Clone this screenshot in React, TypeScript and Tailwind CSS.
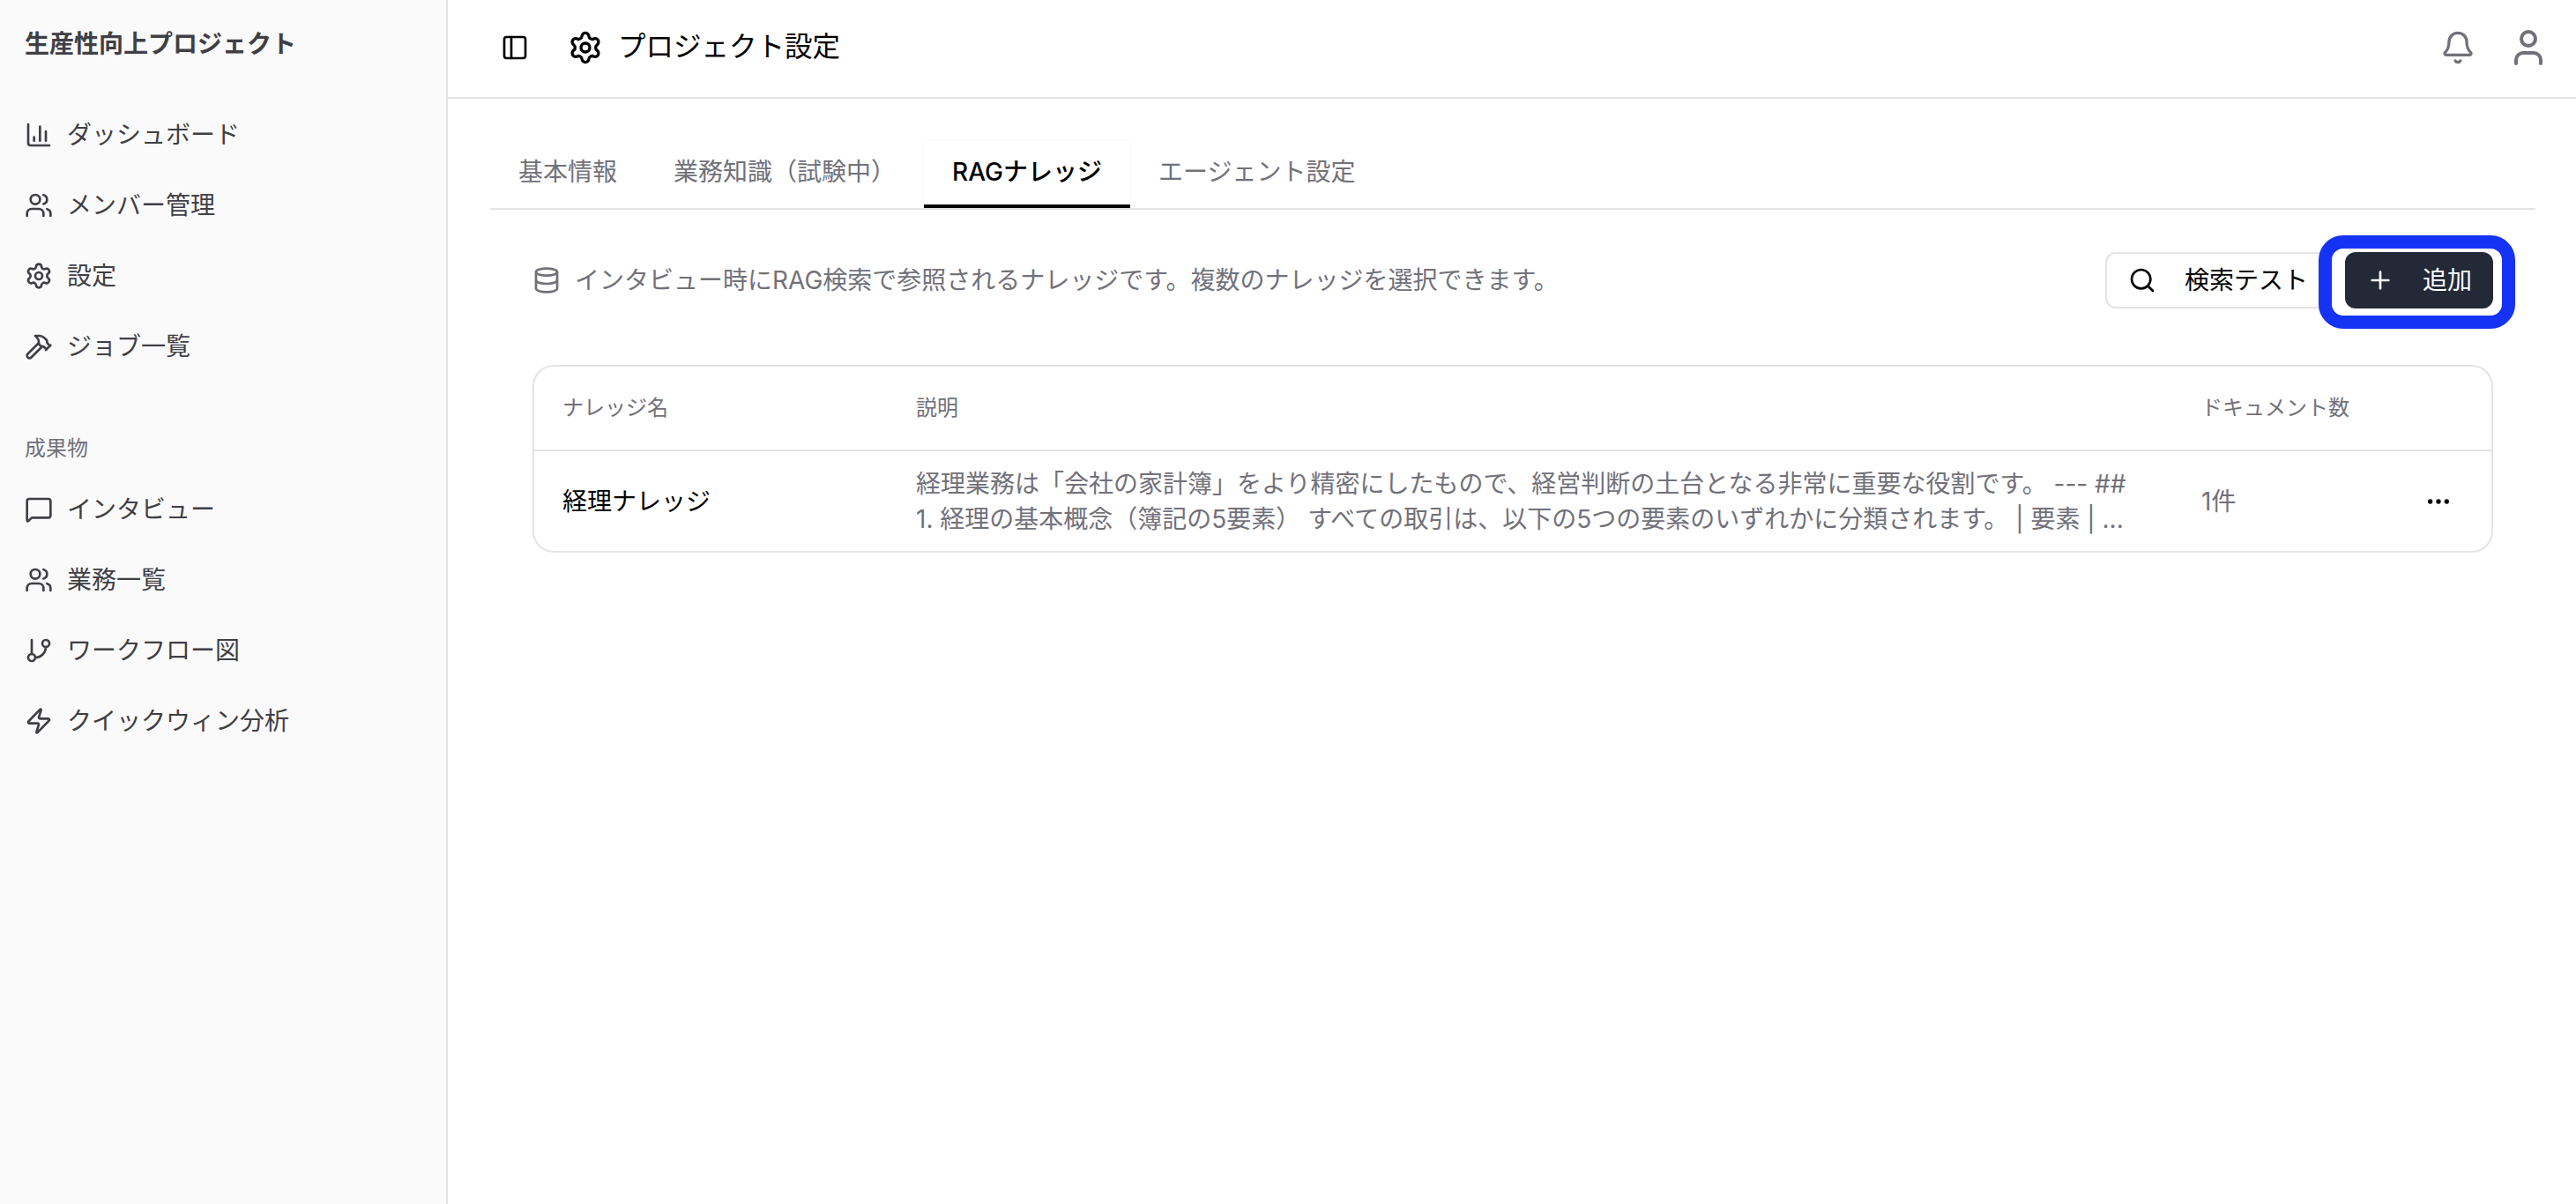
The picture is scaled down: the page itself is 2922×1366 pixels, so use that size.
import { BarChart3, Bell, Database, GitBranch, Hammer, MessageSquare, MoreHorizontal, PanelLeft, Plus, Search, Settings, User, Users, Zap } from "lucide-react";
import type { ComponentType } from "react";

type NavItem = { label: string; icon: ComponentType<{ size?: number; className?: string }> };

const MAIN_NAV: NavItem[] = [
  { label: "ダッシュボード", icon: BarChart3 },
  { label: "メンバー管理", icon: Users },
  { label: "設定", icon: Settings },
  { label: "ジョブ一覧", icon: Hammer },
];

const OUTPUT_NAV: NavItem[] = [
  { label: "インタビュー", icon: MessageSquare },
  { label: "業務一覧", icon: Users },
  { label: "ワークフロー図", icon: GitBranch },
  { label: "クイックウィン分析", icon: Zap },
];

const TABS = ["基本情報", "業務知識（試験中）", "RAGナレッジ", "エージェント設定"];

function NavRow({ item }: { item: NavItem }) {
  const Icon = item.icon;
  return (
    <div className="flex h-[80px] items-center gap-[16px] pl-[28px] text-[28px] text-[#3f3f46]">
      <Icon size={32} />
      <span>{item.label}</span>
    </div>
  );
}

export default function App() {
  return (
    <div className="flex h-[1366px] w-[2922px] overflow-hidden bg-white font-['Inter','Noto_Sans_CJK_JP',sans-serif]">
      {/* サイドバー */}
      <aside className="flex w-[508px] shrink-0 flex-col border-r-2 border-[#e4e4e7] bg-[#fafafa]">
        <div className="flex h-[100px] items-center pl-[28px] text-[28px] font-bold text-[#3f3f46]">生産性向上プロジェクト</div>
        <nav className="mt-[13px]">
          {MAIN_NAV.map((item) => <NavRow key={item.label} item={item} />)}
        </nav>
        <div className="mt-[47px] flex h-[58px] items-center pl-[28px] text-[24px] text-[#71717a]">成果物</div>
        <nav>
          {OUTPUT_NAV.map((item) => <NavRow key={item.label} item={item} />)}
        </nav>
      </aside>

      <main className="flex min-w-0 flex-1 flex-col">
        {/* ヘッダー */}
        <header className="flex h-[112px] items-center border-b-2 border-[#e4e4e7] pr-[30px] pb-[2px] pl-[60px]">
          <PanelLeft size={32} className="text-black" />
          <Settings size={40} className="ml-[44px] text-black" />
          <h1 className="ml-[17px] pb-[2px] text-[31.5px] text-black">プロジェクト設定</h1>
          <div className="ml-auto flex items-center gap-[36px] text-[#71717a]">
            <Bell size={40} />
            <User size={48} />
          </div>
        </header>

        <div className="pt-[48px] pr-[46px] pl-[48px]">
          {/* タブ */}
          <div className="flex h-[78px] border-b-2 border-[#e4e4e7]">
            {TABS.map((tab) => (
              <div
                key={tab}
                className={
                  tab === "RAGナレッジ"
                    ? "flex items-center border-b-4 border-black bg-white px-[32px] pb-[2px] text-[28px] font-medium text-black shadow-[0_0_3px_rgba(0,0,0,0.05)]"
                    : "flex items-center px-[32px] pb-[6px] text-[28px] text-[#71717a]"
                }
              >
                {tab}
              </div>
            ))}
          </div>

          <div className="px-[48px]">
            {/* 説明と操作 */}
            <div className="mt-[48px] flex h-[64px] items-center">
              <Database size={32} className="text-[#71717a]" />
              <p className="ml-[16px] text-[28px] text-[#71717a]">インタビュー時にRAG検索で参照されるナレッジです。複数のナレッジを選択できます。</p>
              <div className="ml-auto flex gap-[16px]">
                <button className="flex h-[64px] items-center gap-[32px] rounded-[12px] border-2 border-[#e4e4e7] bg-white px-[24px] text-[28px] text-black">
                  <Search size={32} />
                  検索テスト
                </button>
                <div className="relative">
                  {/* 強調の枠 */}
                  <div className="absolute -top-[19px] -right-[25px] -bottom-[23px] -left-[30px] rounded-[28px] border-[15px] border-[#1533f5] bg-white" />
                  <button className="relative flex h-[64px] items-center gap-[32px] rounded-[12px] bg-[#232936] px-[24px] text-[28px] text-white">
                    <Plus size={32} />
                    追加
                  </button>
                </div>
              </div>
            </div>

            {/* ナレッジ一覧 */}
            <div className="mt-[64px] overflow-hidden rounded-[24px] border-2 border-[#e4e4e7]">
              <div className="grid h-[96px] grid-cols-[399px_1458px_1fr] items-center border-b-2 border-[#e4e4e7] text-[24px] text-[#71717a]">
                <div className="pl-[32px]">ナレッジ名</div>
                <div className="pl-[34px]">説明</div>
                <div className="pl-[34px]">ドキュメント数</div>
              </div>
              <div className="grid h-[113px] grid-cols-[399px_1458px_1fr] items-center text-[28px]">
                <div className="pl-[32px] text-black">経理ナレッジ</div>
                <div className="pl-[34px] leading-[40px] whitespace-nowrap text-[#71717a]">
                  経理業務は「会社の家計簿」をより精密にしたもので、経営判断の土台となる非常に重要な役割です。 --- ##
                  <br />
                  1. 経理の基本概念（簿記の5要素） すべての取引は、以下の5つの要素のいずれかに分類されます。 | 要素 | ...
                </div>
                <div className="flex items-center justify-between pr-[44px] pl-[34px] text-[#71717a]">
                  <span>1件</span>
                  <MoreHorizontal size={32} className="text-black" />
                </div>
              </div>
            </div>
          </div>
        </div>
      </main>
    </div>
  );
}
